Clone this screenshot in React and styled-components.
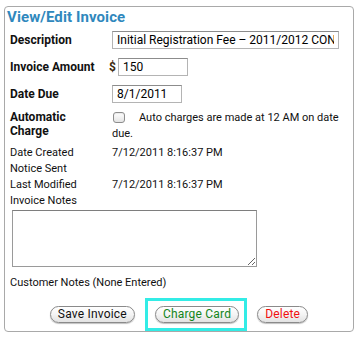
import React from "react";
import styled, { createGlobalStyle } from "styled-components";

const Global = createGlobalStyle`
  html, body { margin: 0; padding: 0; background: #fff; }
  body { font-family: Roboto, "Liberation Sans", sans-serif; color: #111; }
`;

const Panel = styled.div`
  box-sizing: border-box;
  margin: 6px 0 0 4px;
  width: 350px;
  height: 326px;
  border: 1px solid #a9a9a9;
  border-radius: 4px;
  padding: 0 5px;
  display: flex;
  flex-direction: column;
`;

const Title = styled.h2`
  margin: 0 0 0 -3px;
  height: 19px;
  line-height: 20px;
  font-size: 15px;
  font-weight: 700;
  color: #2f88bd;
  letter-spacing: 0.1px;
`;

const Row = styled.div`
  display: flex;
  align-items: ${(p) => (p.$top ? "flex-start" : "center")};
  height: ${(p) => (p.$h ? `${p.$h}px` : "auto")};
  padding-top: ${(p) => p.$pt || 0}px;
`;

const Label = styled.div`
  flex: 0 0 102px;
  font-weight: ${(p) => (p.$bold ? 700 : 400)};
  font-size: ${(p) => (p.$bold ? 12 : 11)}px;
  line-height: ${(p) => (p.$bold ? 14 : 16)}px;
`;

const Value = styled.div`
  flex: 1;
  display: ${(p) => (p.$flex ? "flex" : "block")};
  align-items: center;
  font-size: 11px;
  line-height: ${(p) => p.$lh || 16}px;
  min-width: 0;
`;

const TextInput = styled.input`
  box-sizing: border-box;
  width: ${(p) => p.$w}px;
  height: 18px;
  border: 1px solid #b4b4b4;
  border-top-color: #8c8c8c;
  padding: 0 4px;
  margin: 0;
  font-family: Roboto, "Liberation Sans", sans-serif;
  font-size: 12px;
  color: #000;
  background: #fff;
  outline: none;
`;

const Dollar = styled.span`
  margin-left: -3px;
  width: 9px;
  font-size: 12px;
  font-weight: 700;
  color: #3a2a10;
`;

const Check = styled.span`
  display: inline-block;
  box-sizing: border-box;
  width: 12px;
  height: 11px;
  margin: 0 14px -2px 1px;
  border: 1px solid #8d8d8d;
  border-radius: 3px;
  background: linear-gradient(#ffffff, #e4e4e4);
  box-shadow: inset 0 1px 1px rgba(0, 0, 0, 0.08);
`;

const Info = styled.div`
  font-size: 11px;
  line-height: 16px;
  margin-top: ${(p) => p.$mt || 0}px;
`;

const Notes = styled.textarea`
  box-sizing: border-box;
  display: block;
  width: 245px;
  height: 57px;
  margin: 1px 0 0 2px;
  border: 1px solid #9a9a9a;
  border-top-color: #7e7e7e;
  padding: 2px;
  font-family: Roboto, "Liberation Sans", sans-serif;
  font-size: 11px;
  outline: none;
`;

const Buttons = styled.div`
  display: flex;
  justify-content: center;
  align-items: center;
  gap: 10px;
  height: 17px;
  margin-top: 15px;
`;

const Highlight = styled.span`
  display: inline-flex;
  border: 3px solid #33ece6;
  padding: 5px 5px 5px 7px;
  margin: -8px 0;
`;

const Button = styled.button`
  box-sizing: border-box;
  height: 17px;
  padding: 0 7px;
  border: 1px solid #8a8a8a;
  border-radius: 9px;
  background: linear-gradient(#ffffff 0%, #f4f4f4 50%, #e2e2e2 100%);
  box-shadow: 0 1px 1px rgba(0, 0, 0, 0.25);
  font-family: Roboto, "Liberation Sans", sans-serif;
  font-size: 12px;
  line-height: 15px;
  color: ${(p) => p.$color || "#111"};
  letter-spacing: 0.2px;
  cursor: pointer;
`;

export default function App() {
  return (
    <>
      <Global />
      <Panel>
        <Title>View/Edit Invoice</Title>
        <Row $h={27}>
          <Label $bold>Description</Label>
          <Value>
            <TextInput $w={227} defaultValue="Initial Registration Fee – 2011/2012 CONTRACT" />
          </Value>
        </Row>
        <Row $h={27}>
          <Label $bold>Invoice Amount</Label>
          <Value $flex>
            <Dollar>$</Dollar>
            <TextInput $w={70} defaultValue="150" />
          </Value>
        </Row>
        <Row $h={27}>
          <Label $bold>Date Due</Label>
          <Value>
            <TextInput $w={70} defaultValue="8/1/2011" />
          </Value>
        </Row>
        <Row $top $pt={3}>
          <Label $bold>
            Automatic
            <br />
            Charge
          </Label>
          <Value $lh={16}>
            <Check />
            Auto charges are made at 12 AM on date due.
          </Value>
        </Row>
        <Row $top $pt={3}>
          <Label>Date Created</Label>
          <Value>7/12/2011 8:16:37 PM</Value>
        </Row>
        <Row $top>
          <Label>Notice Sent</Label>
          <Value></Value>
        </Row>
        <Row $top>
          <Label>Last Modified</Label>
          <Value>7/12/2011 8:16:37 PM</Value>
        </Row>
        <Info>Invoice Notes</Info>
        <Notes />
        <Info $mt={8}>Customer Notes (None Entered)</Info>
        <Buttons>
          <Button>Save Invoice</Button>
          <Highlight>
            <Button $color="#13851a">Charge Card</Button>
          </Highlight>
          <Button $color="#f01010">Delete</Button>
        </Buttons>
      </Panel>
    </>
  );
}
